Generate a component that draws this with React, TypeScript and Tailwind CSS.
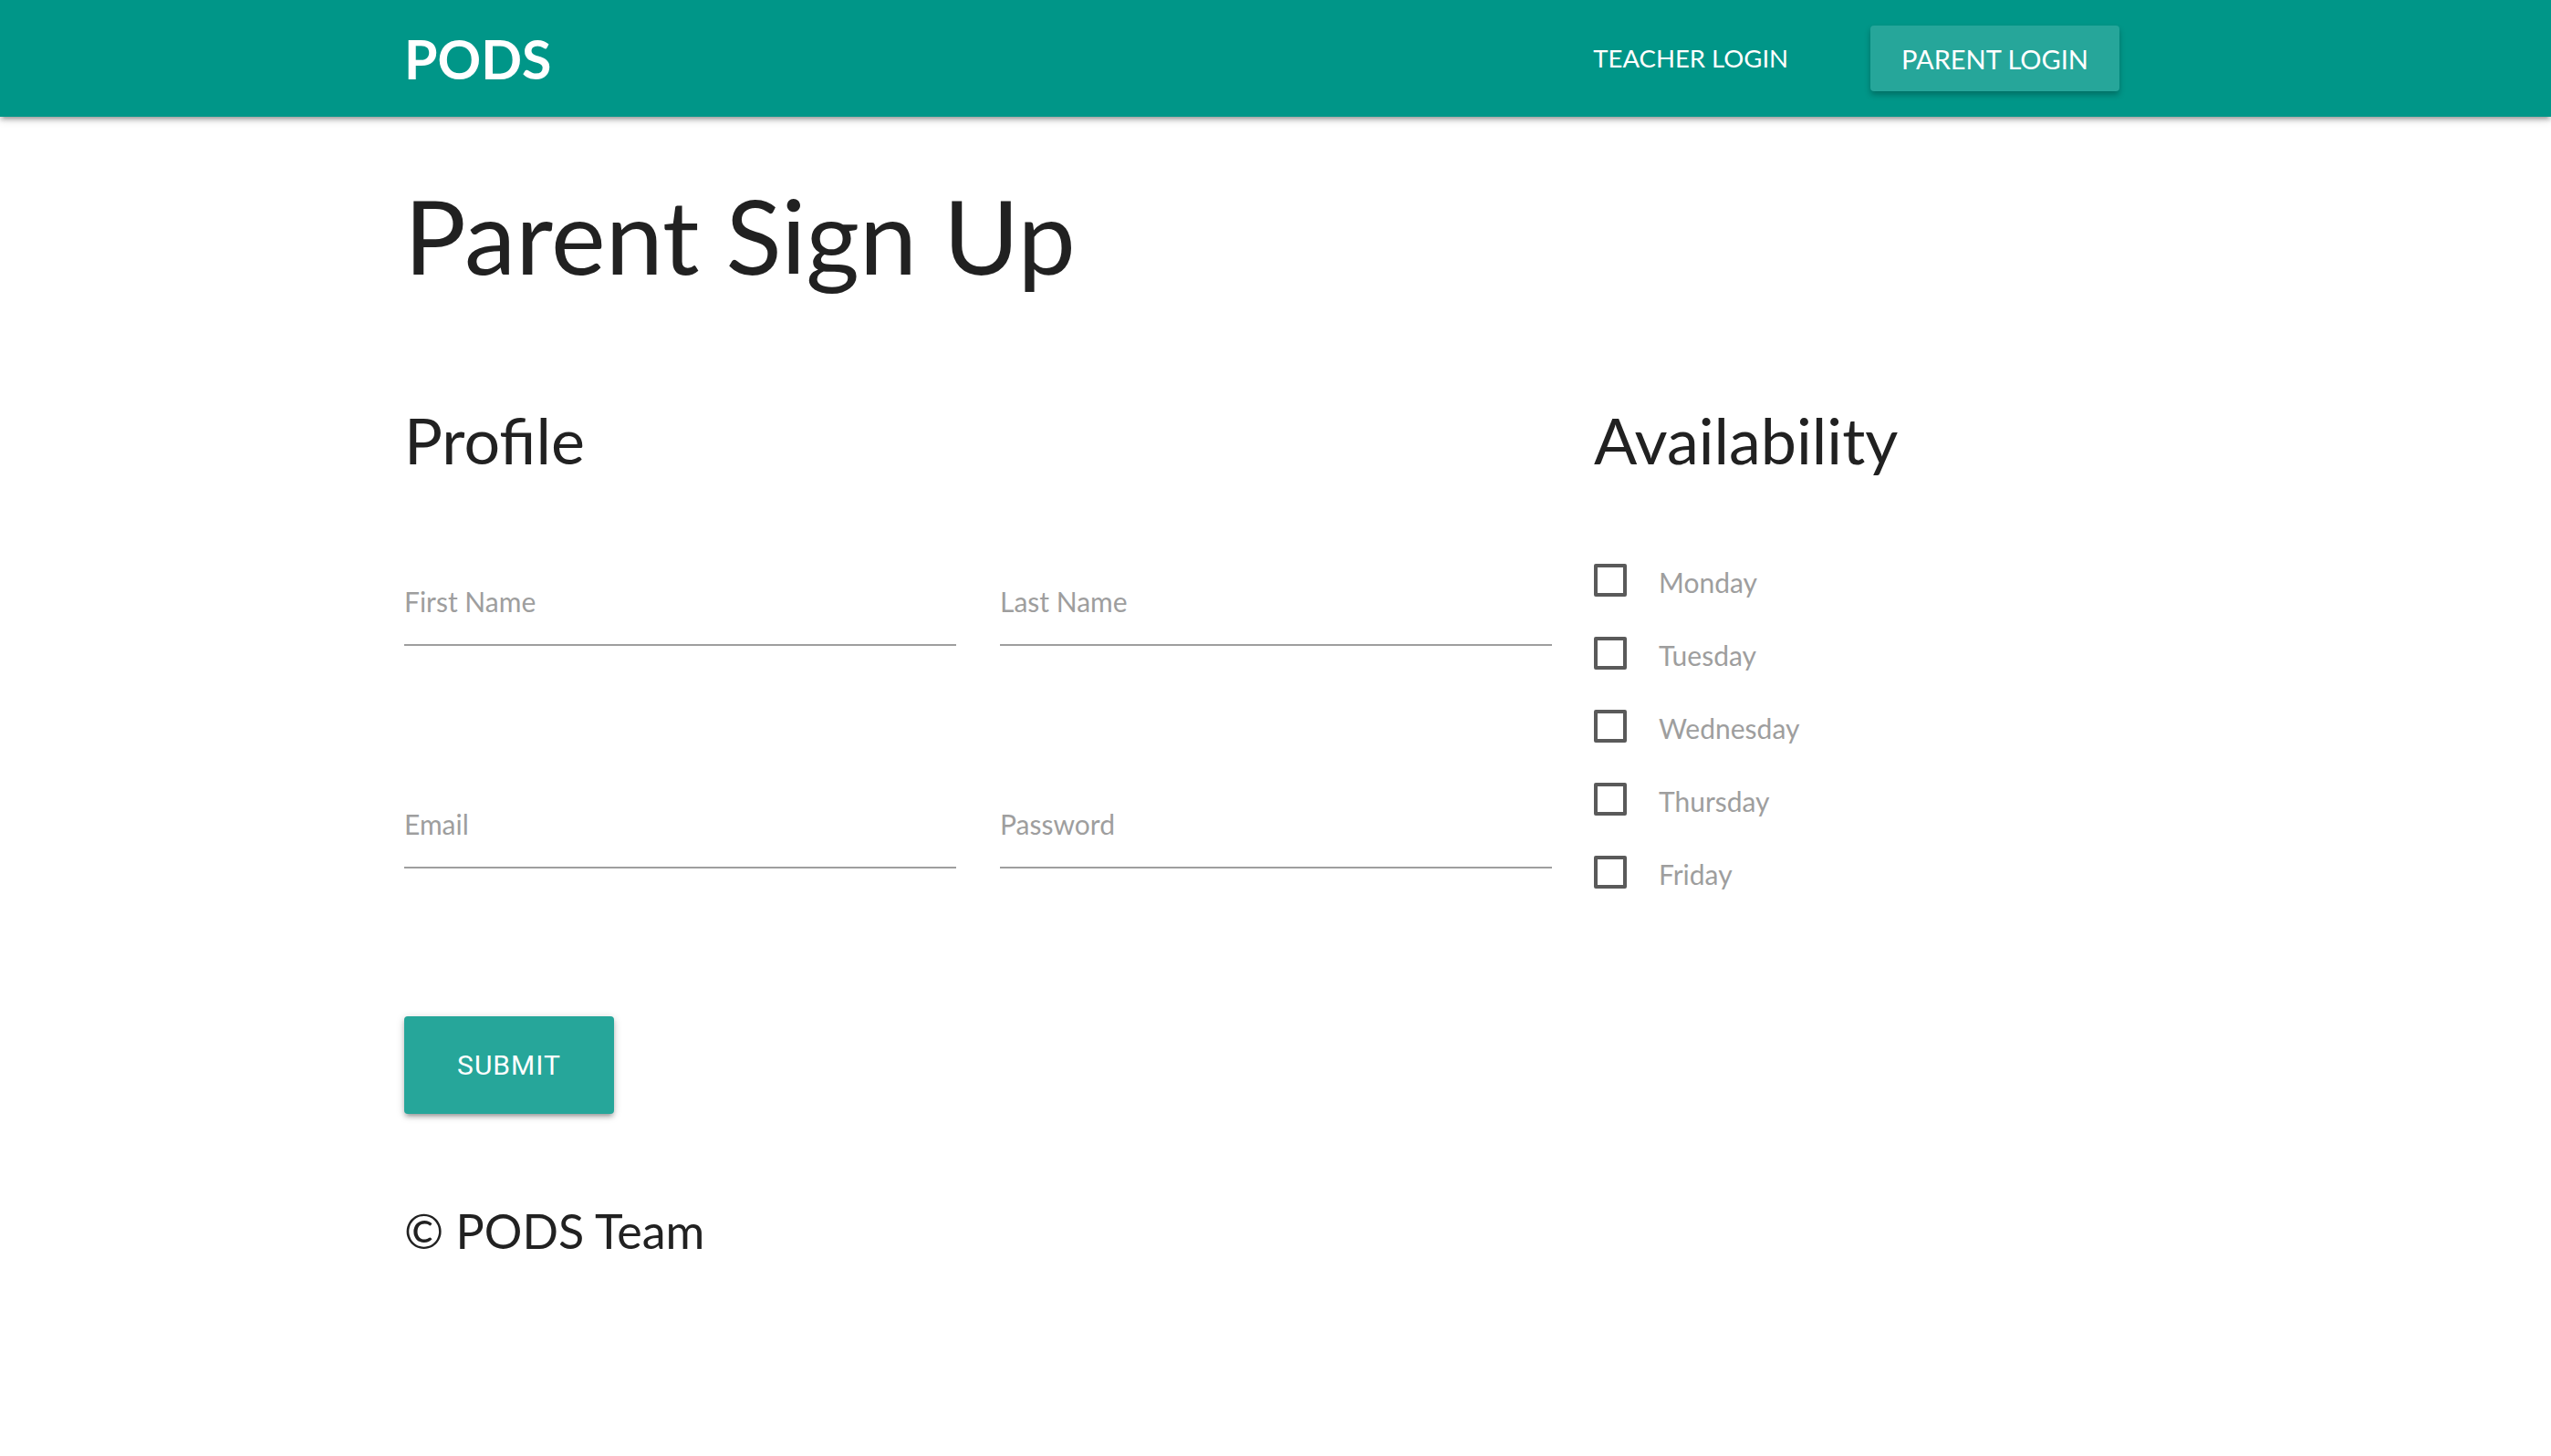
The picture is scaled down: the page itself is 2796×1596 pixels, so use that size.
const days = ["Monday", "Tuesday", "Wednesday", "Thursday", "Friday"];

const fields = [
  ["First Name", "Last Name"],
  ["Email", "Password"],
];

function InputField({ label }: { label: string }) {
  return (
    <div className="border-b-2 border-[#9e9e9e] pb-[32px]">
      <span className="block text-[30px] leading-none text-[#9e9e9e]">{label}</span>
    </div>
  );
}

function DayCheckbox({ day }: { day: string }) {
  return (
    <label className="flex h-[80px] items-center gap-[35px]">
      <span className="h-[36px] w-[36px] rounded-[2px] border-4 border-[#5a5a5a]"></span>
      <span className="pt-[4px] text-[30px] leading-none text-[#9e9e9e]">{day}</span>
    </label>
  );
}

export default function App() {
  return (
    <div className="min-h-screen bg-white font-['Lato',sans-serif] text-[#212121]">
      <nav className="relative z-10 h-[128px] bg-[#009688] shadow-[0_4px_4px_0_rgba(0,0,0,0.14),0_6px_2px_-4px_rgba(0,0,0,0.12),0_2px_10px_0_rgba(0,0,0,0.2)]">
        <div className="mx-auto flex h-full w-[1958px] items-center justify-between px-6">
          <span className="text-[59px] font-bold leading-none text-white">PODS</span>
          <div className="mr-[30px] flex items-center gap-[90px]">
            <a className="text-[27.5px] leading-none text-white">TEACHER LOGIN</a>
            <button className="h-[72px] rounded-[4px] bg-[#26a69a] px-[34px] text-[29px] leading-none text-white shadow-[0_4px_6px_rgba(0,0,0,0.25)]">
              PARENT LOGIN
            </button>
          </div>
        </div>
      </nav>

      <main className="mx-auto w-[1958px] px-6">
        <h1 className="mt-[73px] text-[113px] leading-none">Parent Sign Up</h1>

        <div className="flex">
          <div className="w-[1258px]">
            <h4 className="mt-[133px] text-[70px] leading-none">Profile</h4>
            <div className="mt-[127px] grid grid-cols-2 gap-x-[48px] gap-y-[180px]">
              {fields.flat().map((f) => (
                <InputField key={f} label={f} />
              ))}
            </div>
            <button className="mt-[162px] h-[107px] w-[230px] rounded-[4px] bg-[#26a69a] font-['Roboto',sans-serif] text-[30px] tracking-[1px] text-white shadow-[0_4px_4px_0_rgba(0,0,0,0.14),0_6px_2px_-4px_rgba(0,0,0,0.12),0_2px_10px_0_rgba(0,0,0,0.2)]">
              SUBMIT
            </button>
          </div>
          <div className="ml-[46px] flex-1">
            <h4 className="mt-[133px] text-[70px] leading-none">Availability</h4>
            <div className="mt-[79px] flex flex-col">
              {days.map((d) => (
                <DayCheckbox key={d} day={d} />
              ))}
            </div>
          </div>
        </div>

        <p className="mt-[102px] text-[52px] leading-none">© PODS Team</p>
      </main>
    </div>
  );
}
